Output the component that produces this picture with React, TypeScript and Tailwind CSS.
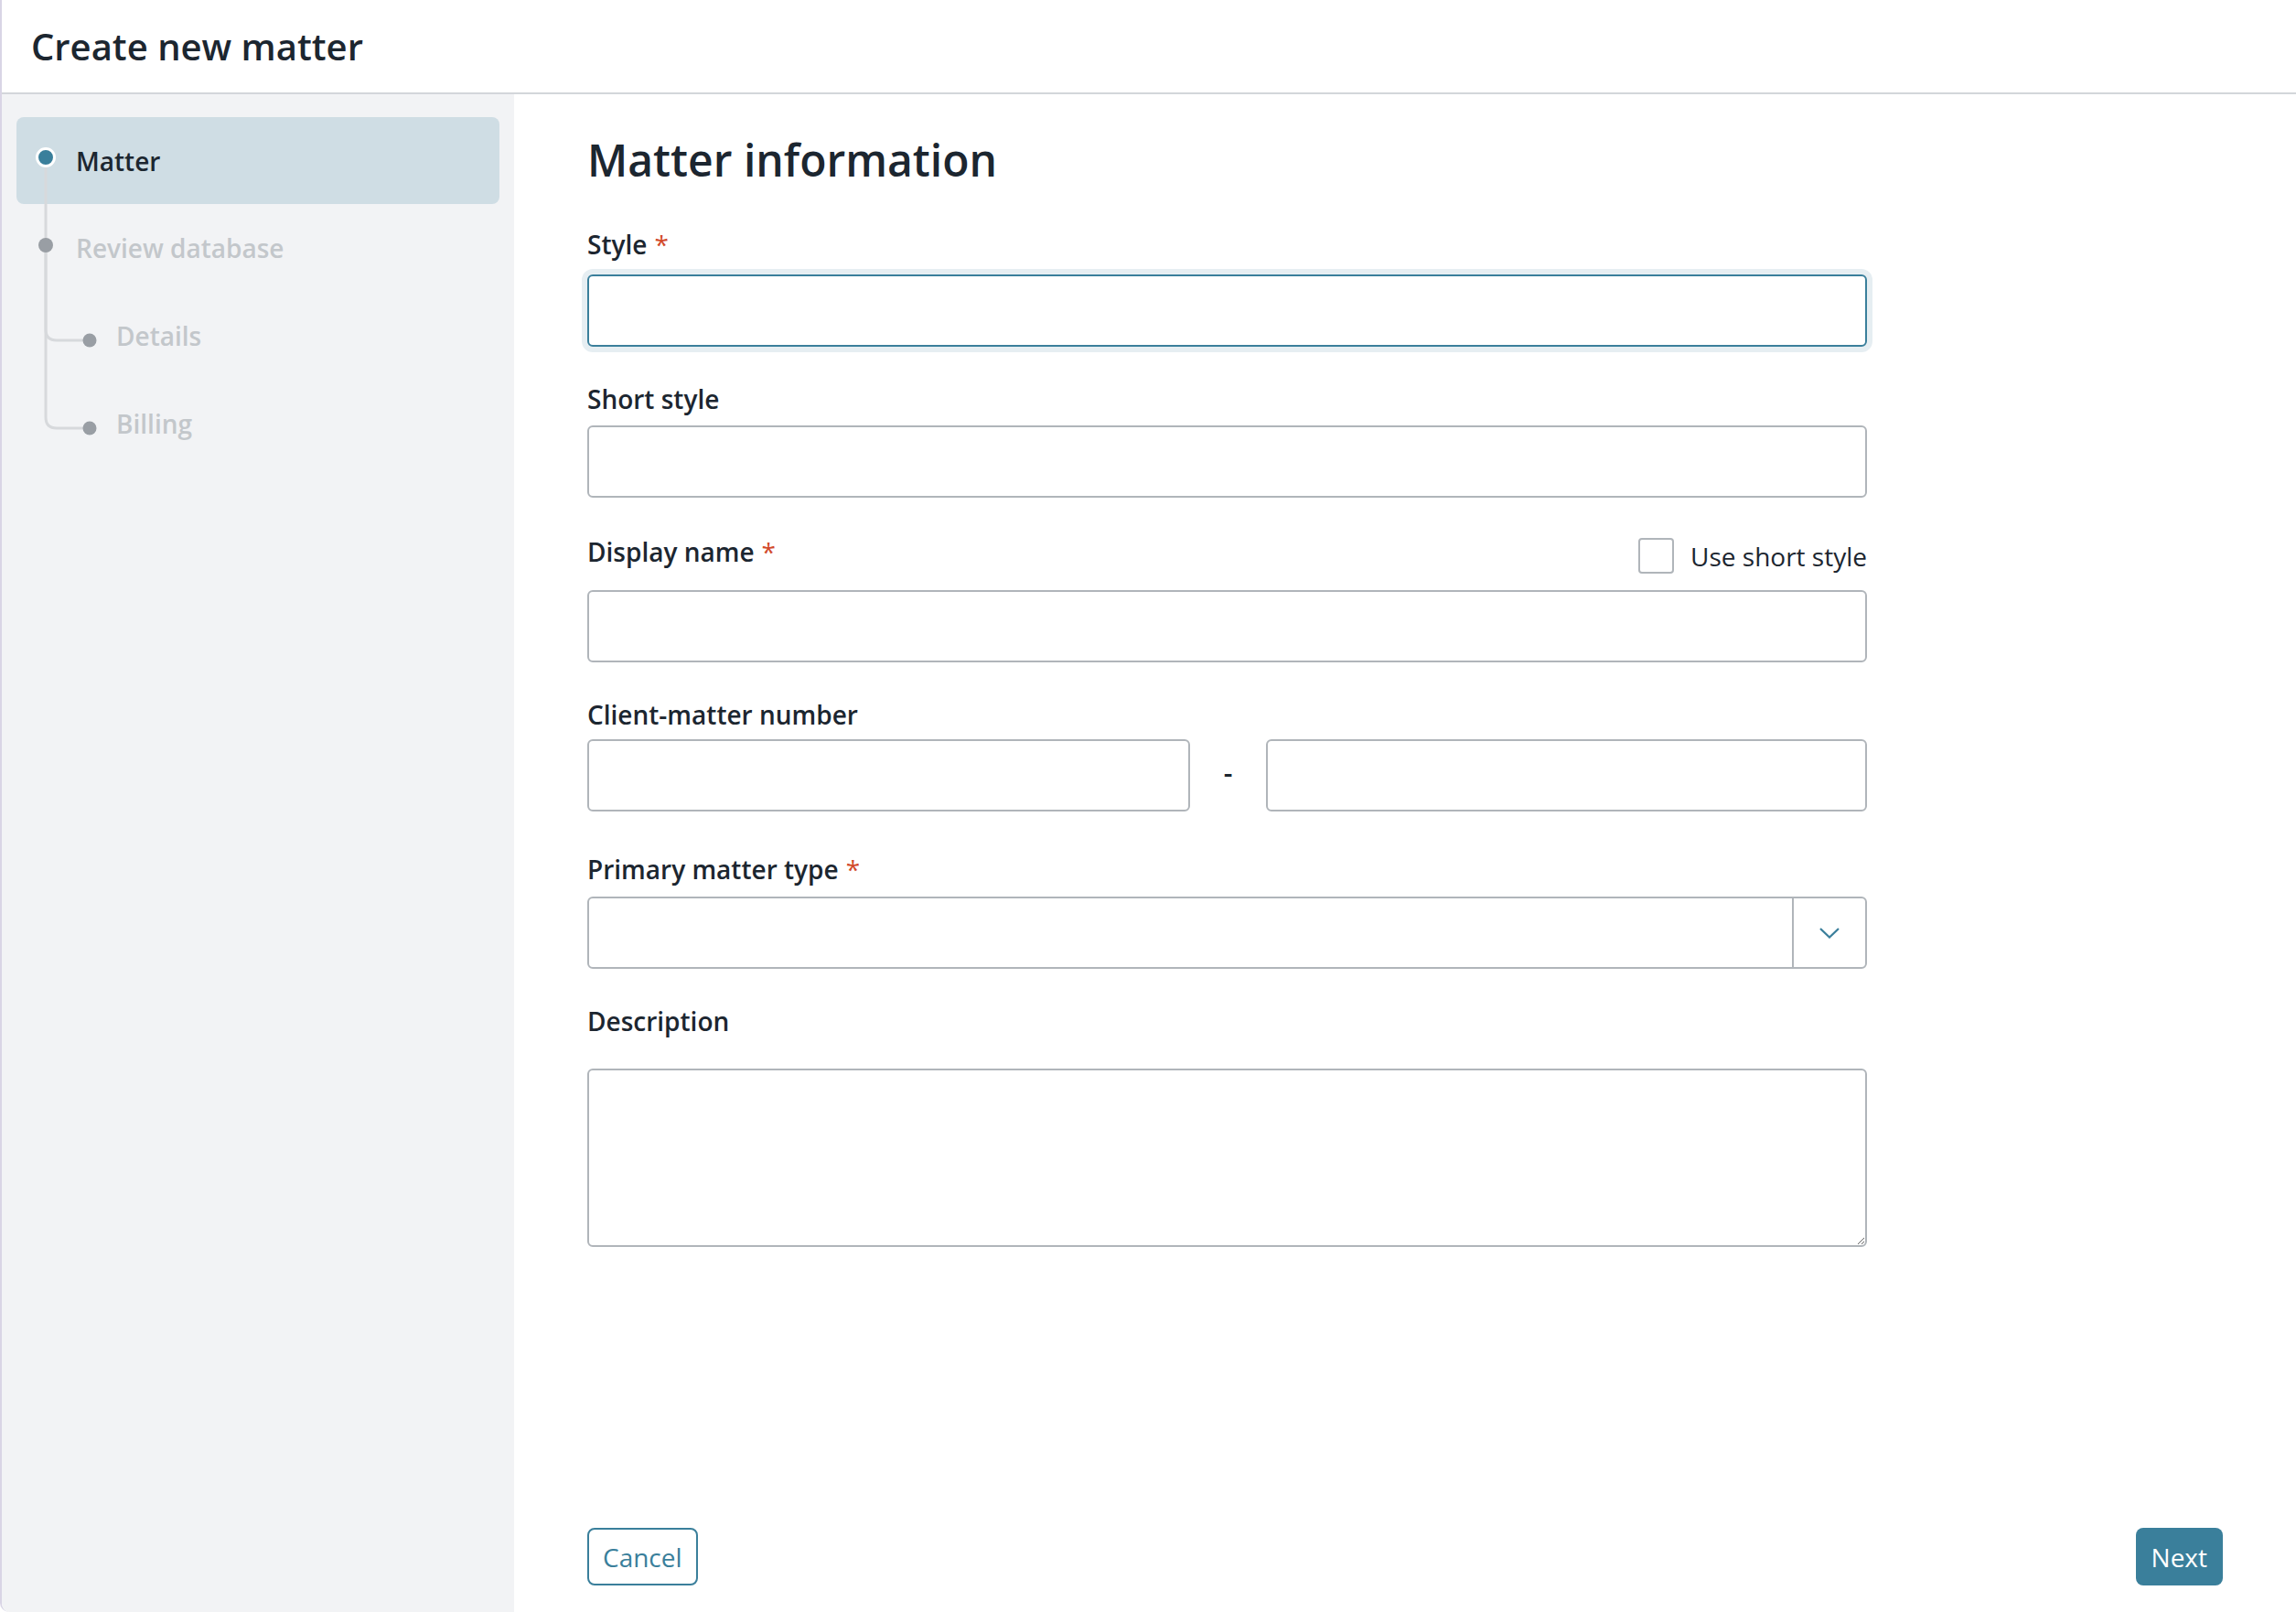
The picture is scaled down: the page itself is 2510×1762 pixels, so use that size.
import React, { useState } from "react";

const font = { fontFamily: '"Open Sans", "Noto Sans", "Liberation Sans", sans-serif' };

const inputClass =
  "block w-full h-[79px] rounded-[6px] border-2 border-[#b0b5ba] bg-white px-4 text-[28px] text-[#1c2630] outline-none";

const Label = ({ text, required }: { text: string; required?: boolean }) => (
  <label className="block text-[28px] leading-[38px] font-semibold text-[#1c2630]">
    {text}
    {required && <span className="ml-[8px] font-normal text-[#d2492a]">*</span>}
  </label>
);

const StepTree = () => (
  <svg className="absolute left-0 top-0" width="120" height="400" viewBox="0 0 120 400" fill="none">
    <path d="M48 69 V257 Q48 269 60 269 H96" stroke="#d7d9dc" strokeWidth="3" />
    <path d="M48 165 V353 Q48 365 60 365 H96" stroke="#d7d9dc" strokeWidth="3" />
    <circle cx="48" cy="69" r="9.5" fill="#3a7f9b" stroke="#ffffff" strokeWidth="3" />
    <circle cx="48" cy="165" r="8" fill="#999ea4" />
    <circle cx="96" cy="269" r="7.5" fill="#999ea4" />
    <circle cx="96" cy="365" r="7.5" fill="#999ea4" />
  </svg>
);

const Sidebar = () => (
  <aside className="relative w-[560px] shrink-0 bg-[#f2f3f5] px-[16px] pt-[25px]">
    <div className="flex h-[95px] items-center rounded-[8px] bg-[#cfdde4] pl-[65px] text-[28px] font-semibold text-[#1c2630]">
      Matter
    </div>
    <div className="flex h-[96px] items-center pl-[65px] text-[28px] font-semibold text-[#c3c7cb]">
      Review database
    </div>
    <div className="flex h-[96px] items-center pl-[109px] text-[28px] font-semibold text-[#c3c7cb]">
      Details
    </div>
    <div className="flex h-[96px] items-center pl-[109px] text-[28px] font-semibold text-[#c3c7cb]">
      Billing
    </div>
    <StepTree />
  </aside>
);

export default function App() {
  const [useShort, setUseShort] = useState(false);

  return (
    <div
      className="flex h-[1762px] w-full flex-col overflow-hidden rounded-bl-[10px] border-l-2 border-[#d9d5e5] bg-white"
      style={font}
    >
      <header className="flex h-[103px] shrink-0 items-center border-b-2 border-[#d3d6da] pl-[32px]">
        <h1 className="text-[40px] font-semibold leading-[50px] text-[#1c2630]">Create new matter</h1>
      </header>

      <div className="flex flex-1">
        <Sidebar />

        <main className="flex flex-1 flex-col px-[80px] pt-[43px] pb-[29px]">
          <div className="w-[1399px]">
            <h2 className="text-[48px] font-semibold leading-[58px] text-[#1c2630]">Matter information</h2>

            <div className="mt-[44px]">
              <Label text="Style" required />
            </div>
            <input
              className="mt-[14px] block w-full h-[79px] rounded-[6px] border-2 border-[#3a7f9b] bg-white px-4 text-[28px] outline-none shadow-[0_0_0_6px_#e6eef2]"
              type="text"
            />

            <div className="mt-[38px]">
              <Label text="Short style" />
            </div>
            <input className={`mt-[10px] ${inputClass}`} type="text" />

            <div className="mt-[40px] flex items-start justify-between">
              <Label text="Display name" required />
              <label className="mt-[4px] flex items-center gap-[18px] text-[28px] leading-[38px] text-[#1c2630]">
                <span
                  onClick={() => setUseShort(!useShort)}
                  className="block h-[39px] w-[39px] rounded-[4px] border-2 border-[#b0b5ba] bg-white"
                />
                Use short style
              </label>
            </div>
            <input className={`mt-[18px] ${inputClass}`} type="text" />

            <div className="mt-[38px]">
              <Label text="Client-matter number" />
            </div>
            <div className="mt-[8px] flex items-center">
              <input className={`${inputClass} !w-[659px]`} type="text" />
              <span className="flex w-[83px] justify-center pb-[5px] text-[30px] font-semibold leading-[38px] text-[#1c2630]">
                -
              </span>
              <input className={`${inputClass} !w-[657px]`} type="text" />
            </div>

            <div className="mt-[44px]">
              <Label text="Primary matter type" required />
            </div>
            <div className="mt-[11px] flex h-[79px] rounded-[6px] border-2 border-[#b0b5ba] bg-white">
              <div className="flex-1" />
              <div className="flex w-[80px] items-center justify-center border-l-2 border-[#b0b5ba]">
                <svg width="22" height="12" viewBox="0 0 22 12" fill="none">
                  <polyline points="1,1 11,10.5 21,1" stroke="#3a7f9b" strokeWidth="2.2" />
                </svg>
              </div>
            </div>

            <div className="mt-[38px]">
              <Label text="Description" />
            </div>
            <textarea className="mt-[33px] block h-[195px] w-full rounded-[6px] border-2 border-[#b0b5ba] bg-white p-4 text-[28px] outline-none" />
          </div>

          <div className="mt-auto flex items-center justify-between">
            <button
              type="button"
              className="h-[63px] rounded-[8px] border-2 border-[#3a7f9b] bg-white px-[15px] text-[28px] text-[#3a7f9b]"
            >
              Cancel
            </button>
            <button
              type="button"
              className="h-[63px] rounded-[8px] bg-[#3a7f9b] px-[17px] text-[28px] text-white"
            >
              Next
            </button>
          </div>
        </main>
      </div>
    </div>
  );
}
